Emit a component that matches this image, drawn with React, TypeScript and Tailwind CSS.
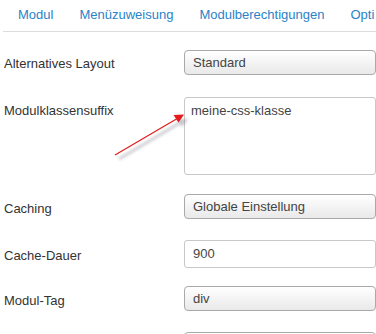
import React from "react";

const font = { fontFamily: '"Liberation Sans", Arial, sans-serif' };

function Select({ value }: { value: string }) {
  return (
    <div className="h-[25px] w-[230px] rounded-[4px] border border-[#a9a9a9] bg-gradient-to-b from-white to-[#e9e9e9] pl-[8px] text-[13px] leading-[23px] text-[#444]">
      {value}
    </div>
  );
}

function Row({ label, children, labelTop }: { label: string; children: React.ReactNode; labelTop: string }) {
  return (
    <div className="flex">
      <div className={`w-[184px] shrink-0 pl-[4px] text-[13px] text-[#333] ${labelTop}`}>{label}</div>
      {children}
    </div>
  );
}

export default function App() {
  return (
    <div className="relative h-[334px] w-[376px] overflow-hidden bg-white" style={font}>
      <div className="ml-[3px] flex h-[32px] w-[400px] items-start border-b border-[#dddddd] pt-[6px] pl-[2px] text-[13px] text-[#2a83c8]">
        <span className="px-[13px] leading-[18px]">Modul</span>
        <span className="px-[13px] leading-[18px]">Menüzuweisung</span>
        <span className="px-[13px] leading-[18px]">Modulberechtigungen</span>
        <span className="px-[13px] leading-[18px] whitespace-nowrap">Opti</span>
      </div>
      <div className="flex flex-col pt-[18px]">
        <Row label="Alternatives Layout" labelTop="pt-[4px]">
          <Select value="Standard" />
        </Row>
        <div className="mt-[22px]">
          <Row label="Modulklassensuffix" labelTop="pt-[4px]">
            <div className="h-[78px] w-[230px] rounded-[3px] border border-[#c8c8c8] bg-white pl-[6px] pt-[5px] text-[13px] leading-[16px] text-[#444]">
              meine-css-klasse
            </div>
          </Row>
        </div>
        <div className="mt-[19px]">
          <Row label="Caching" labelTop="pt-[5px]">
            <Select value="Globale Einstellung" />
          </Row>
        </div>
        <div className="mt-[21px]">
          <Row label="Cache-Dauer" labelTop="pt-[6px]">
            <div className="h-[28px] w-[230px] rounded-[3px] border border-[#c8c8c8] bg-white pl-[8px] text-[13px] leading-[26px] text-[#444]">
              900
            </div>
          </Row>
        </div>
        <div className="mt-[18px]">
          <Row label="Modul-Tag" labelTop="pt-[5px]">
            <Select value="div" />
          </Row>
        </div>
        <div className="mt-[21px]">
          <Row label="" labelTop="">
            <Select value="" />
          </Row>
        </div>
      </div>
      <svg className="pointer-events-none absolute left-0 top-0" width="376" height="334">
        <defs>
          <filter id="blur" x="-20%" y="-20%" width="140%" height="140%">
            <feGaussianBlur stdDeviation="1.6" />
          </filter>
        </defs>
        <g filter="url(#blur)" opacity="0.5">
          <line x1="119" y1="159" x2="183" y2="121" stroke="#8a8a9a" strokeWidth="2.5" />
          <polygon points="188,119 177,119 182,127" fill="#8a8a9a" />
        </g>
        <line x1="115" y1="155" x2="179" y2="117.5" stroke="#e51a1a" strokeWidth="1.2" />
        <polygon points="184,114.5 173.5,115 178.5,122.5" fill="#e51a1a" />
      </svg>
    </div>
  );
}
